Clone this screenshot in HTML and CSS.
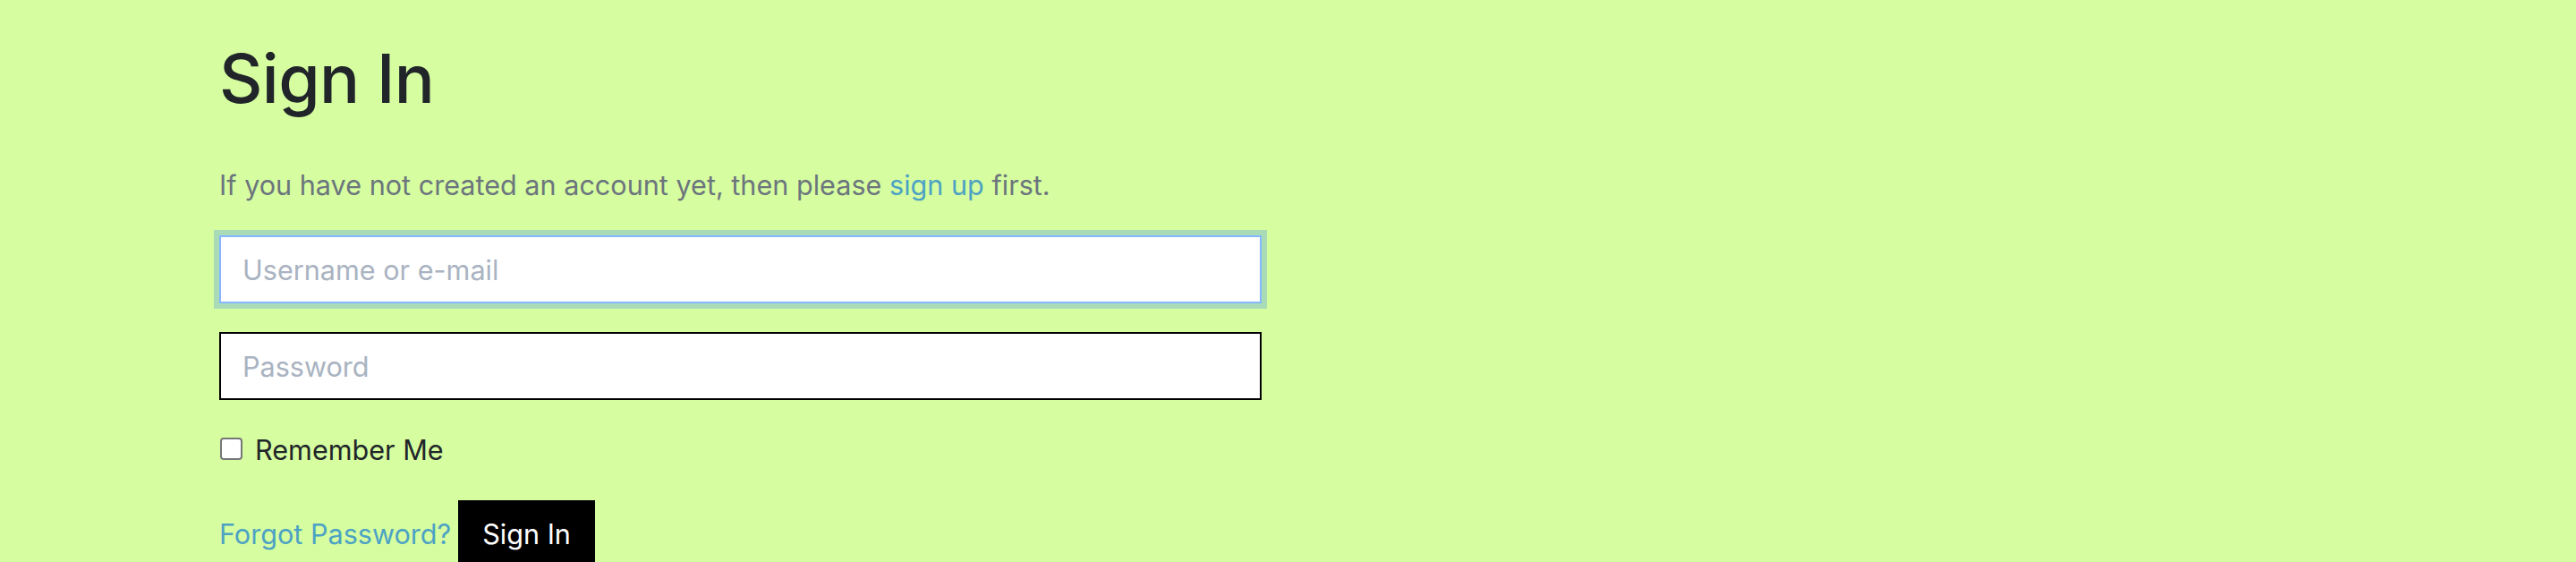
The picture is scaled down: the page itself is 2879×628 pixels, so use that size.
FILE: index.html
```html
<!DOCTYPE html>
<html lang="en">
<head>
<meta charset="utf-8">
<title>Sign In</title>
<link rel="stylesheet" href="styles.css">
</head>
<body>
<main class="page">
  <h1 class="title">Sign In</h1>
  <p class="lead">If you have not created an account yet, then please <a href="#" class="link">sign up</a> first.</p>
  <form class="form">
    <div class="field">
      <input class="control control-focus" type="text" placeholder="Username or e-mail">
    </div>
    <div class="field">
      <input class="control" type="password" placeholder="Password">
    </div>
    <div class="check-row">
      <input class="check" type="checkbox" id="remember">
      <label for="remember" class="check-label">Remember Me</label>
    </div>
    <div class="actions">
      <a href="#" class="link">Forgot Password?</a>
      <button type="button" class="btn">Sign In</button>
    </div>
  </form>
</main>
</body>
</html>
```

FILE: styles.css
```css
html, body {
  margin: 0;
  padding: 0;
}

body {
  background: #d6fea0;
  font-family: Inter, "Noto Sans", "Liberation Sans", sans-serif;
  color: #212529;
  font-size: 30.6px;
  line-height: 48px;
  height: 628px;
  overflow: hidden;
}

.page {
  padding: 40px 0 0 245px;
  width: 1165px;
}

.title {
  margin: 0 0 47px 0;
  font-size: 75px;
  line-height: 96px;
  font-weight: 500;
  color: #212529;
  letter-spacing: -0.6px;
}

.lead {
  margin: 0 0 32px 0;
  color: #6c757d;
  font-size: 30.6px;
}

.link {
  color: #4da2c4;
  text-decoration: none;
}

.form {
  margin: 0;
}

.field {
  margin-bottom: 32px;
}

.control {
  display: block;
  box-sizing: border-box;
  width: 1165px;
  height: 76px;
  margin: 0;
  padding: 12px 24px;
  border: 2px solid #000;
  border-radius: 0;
  background: #fff;
  font-family: inherit;
  font-size: 30.6px;
  line-height: 48px;
  color: #212529;
  outline: none;
}

.control::placeholder {
  color: #a9b3c1;
}

.control-focus {
  border-color: #86b7fe;
  box-shadow: 0 0 0 6px #a9dcb6;
  caret-color: #212529;
}

.check-row {
  display: flex;
  align-items: center;
  height: 48px;
  margin-bottom: 32px;
}

.check {
  appearance: none;
  -webkit-appearance: none;
  box-sizing: border-box;
  width: 25px;
  height: 25px;
  margin: -3px 14px 0 1px;
  border: 2px solid #767676;
  border-radius: 4px;
  background: #fff;
}

.check-label {
  font-size: 30.6px;
  color: #212529;
}

.actions {
  display: flex;
  align-items: baseline;
  gap: 8px;
  font-size: 30.6px;
}

.btn {
  box-sizing: border-box;
  height: 76px;
  padding: 12px 25px;
  border: 2px solid #000;
  border-radius: 0;
  background: #000;
  color: #fff;
  font-family: inherit;
  font-size: 30.6px;
  line-height: 48px;
  cursor: pointer;
}
```
